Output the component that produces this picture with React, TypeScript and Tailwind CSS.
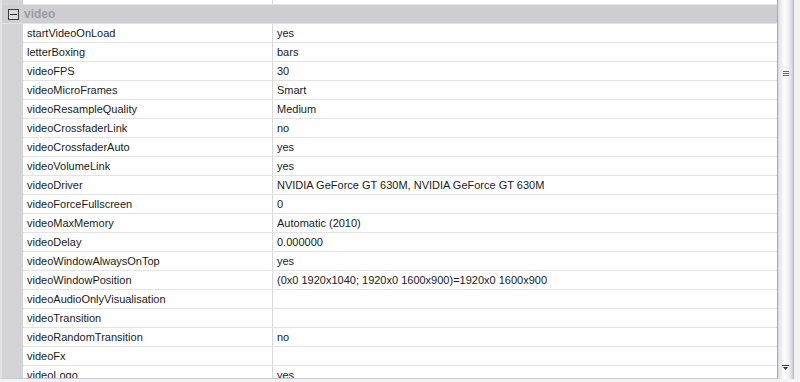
import React from 'react';

type Prop = { name: string; value: string };

const rows: Prop[] = [
  { name: 'startVideoOnLoad', value: 'yes' },
  { name: 'letterBoxing', value: 'bars' },
  { name: 'videoFPS', value: '30' },
  { name: 'videoMicroFrames', value: 'Smart' },
  { name: 'videoResampleQuality', value: 'Medium' },
  { name: 'videoCrossfaderLink', value: 'no' },
  { name: 'videoCrossfaderAuto', value: 'yes' },
  { name: 'videoVolumeLink', value: 'yes' },
  { name: 'videoDriver', value: 'NVIDIA GeForce GT 630M, NVIDIA GeForce GT 630M' },
  { name: 'videoForceFullscreen', value: '0' },
  { name: 'videoMaxMemory', value: 'Automatic (2010)' },
  { name: 'videoDelay', value: '0.000000' },
  { name: 'videoWindowAlwaysOnTop', value: 'yes' },
  { name: 'videoWindowPosition', value: '(0x0 1920x1040; 1920x0 1600x900)=1920x0 1600x900' },
  { name: 'videoAudioOnlyVisualisation', value: '' },
  { name: 'videoTransition', value: '' },
  { name: 'videoRandomTransition', value: 'no' },
  { name: 'videoFx', value: '' },
  { name: 'videoLogo', value: 'yes' },
];

const PropRow: React.FC<{ row: Prop }> = ({ row }) => (
  <div className="flex h-[19px] shrink-0">
    <div className="w-[21px] shrink-0 bg-[#d4d4d6]" />
    <div className="flex flex-1 bg-white border-b border-[#e3e3e5]">
      <div className="w-[250px] shrink-0 pl-[4px] leading-[19px] text-[#1a1a1a] border-r border-[#d9d9db] whitespace-nowrap overflow-hidden">
        {row.name}
      </div>
      <div className="flex-1 pl-[4px] leading-[19px] text-[#1a1a1a] whitespace-nowrap overflow-hidden">
        {row.value}
      </div>
    </div>
  </div>
);

export default function App() {
  return (
    <div
      className="w-[800px] h-[382px] overflow-hidden bg-[#f3f2f5] flex text-[11px]"
      style={{ fontFamily: '"Liberation Sans", Arial, sans-serif' }}
    >
      <div className="w-[778px] h-[379px] flex flex-col overflow-hidden border-l-[2px] border-[#e2e2e4] border-r border-r-[#a9a9ad] border-b border-b-[#c9c9cd]">
        {/* tail of previous section */}
        <div className="flex h-[5px] shrink-0">
          <div className="w-[21px] shrink-0 bg-[#d4d4d6]" />
          <div className="flex flex-1 bg-white border-b border-[#e3e3e5]">
            <div className="w-[250px] shrink-0 border-r border-[#d9d9db]" />
            <div className="flex-1" />
          </div>
        </div>

        {/* category header */}
        <div className="flex items-center h-[19px] shrink-0 bg-[#cfced2] border-b border-[#e3e3e5]">
          <div className="w-[22px] shrink-0 flex items-center justify-center pl-[1px]">
            <div className="w-[11px] h-[11px] border border-[#3a3a3a] bg-[#dcdcde] flex items-center justify-center">
              <div className="w-[7px] h-px bg-[#2a2a2a]" />
            </div>
          </div>
          <span className="font-bold text-[#9c9ca4] text-[12px]">video</span>
        </div>

        {rows.map((row) => (
          <PropRow key={row.name} row={row} />
        ))}
      </div>

      {/* scrollbar */}
      <div className="w-[16px] h-[379px] flex flex-col items-center bg-[linear-gradient(to_right,#dcdce0,#f2f2f5_25%,#ffffff_45%,#f0f0f3_70%,#d4d4d8)] border-r border-[#b4b4b8]">
        <div className="mt-[71px] flex flex-col gap-[1px]">
          <div className="w-[6px] h-px bg-[#6a6a70]" />
          <div className="w-[6px] h-px bg-[#6a6a70]" />
          <div className="w-[6px] h-px bg-[#6a6a70]" />
        </div>
        <div className="flex-1" />
        <svg width="7" height="6" viewBox="0 0 7 6" className="mb-[8px]">
          <rect x="0" y="0" width="7" height="1" fill="#333" />
          <path d="M1 2 H6 L3.5 5 Z" fill="#333" />
        </svg>
      </div>
      <div className="flex-1" />
    </div>
  );
}
